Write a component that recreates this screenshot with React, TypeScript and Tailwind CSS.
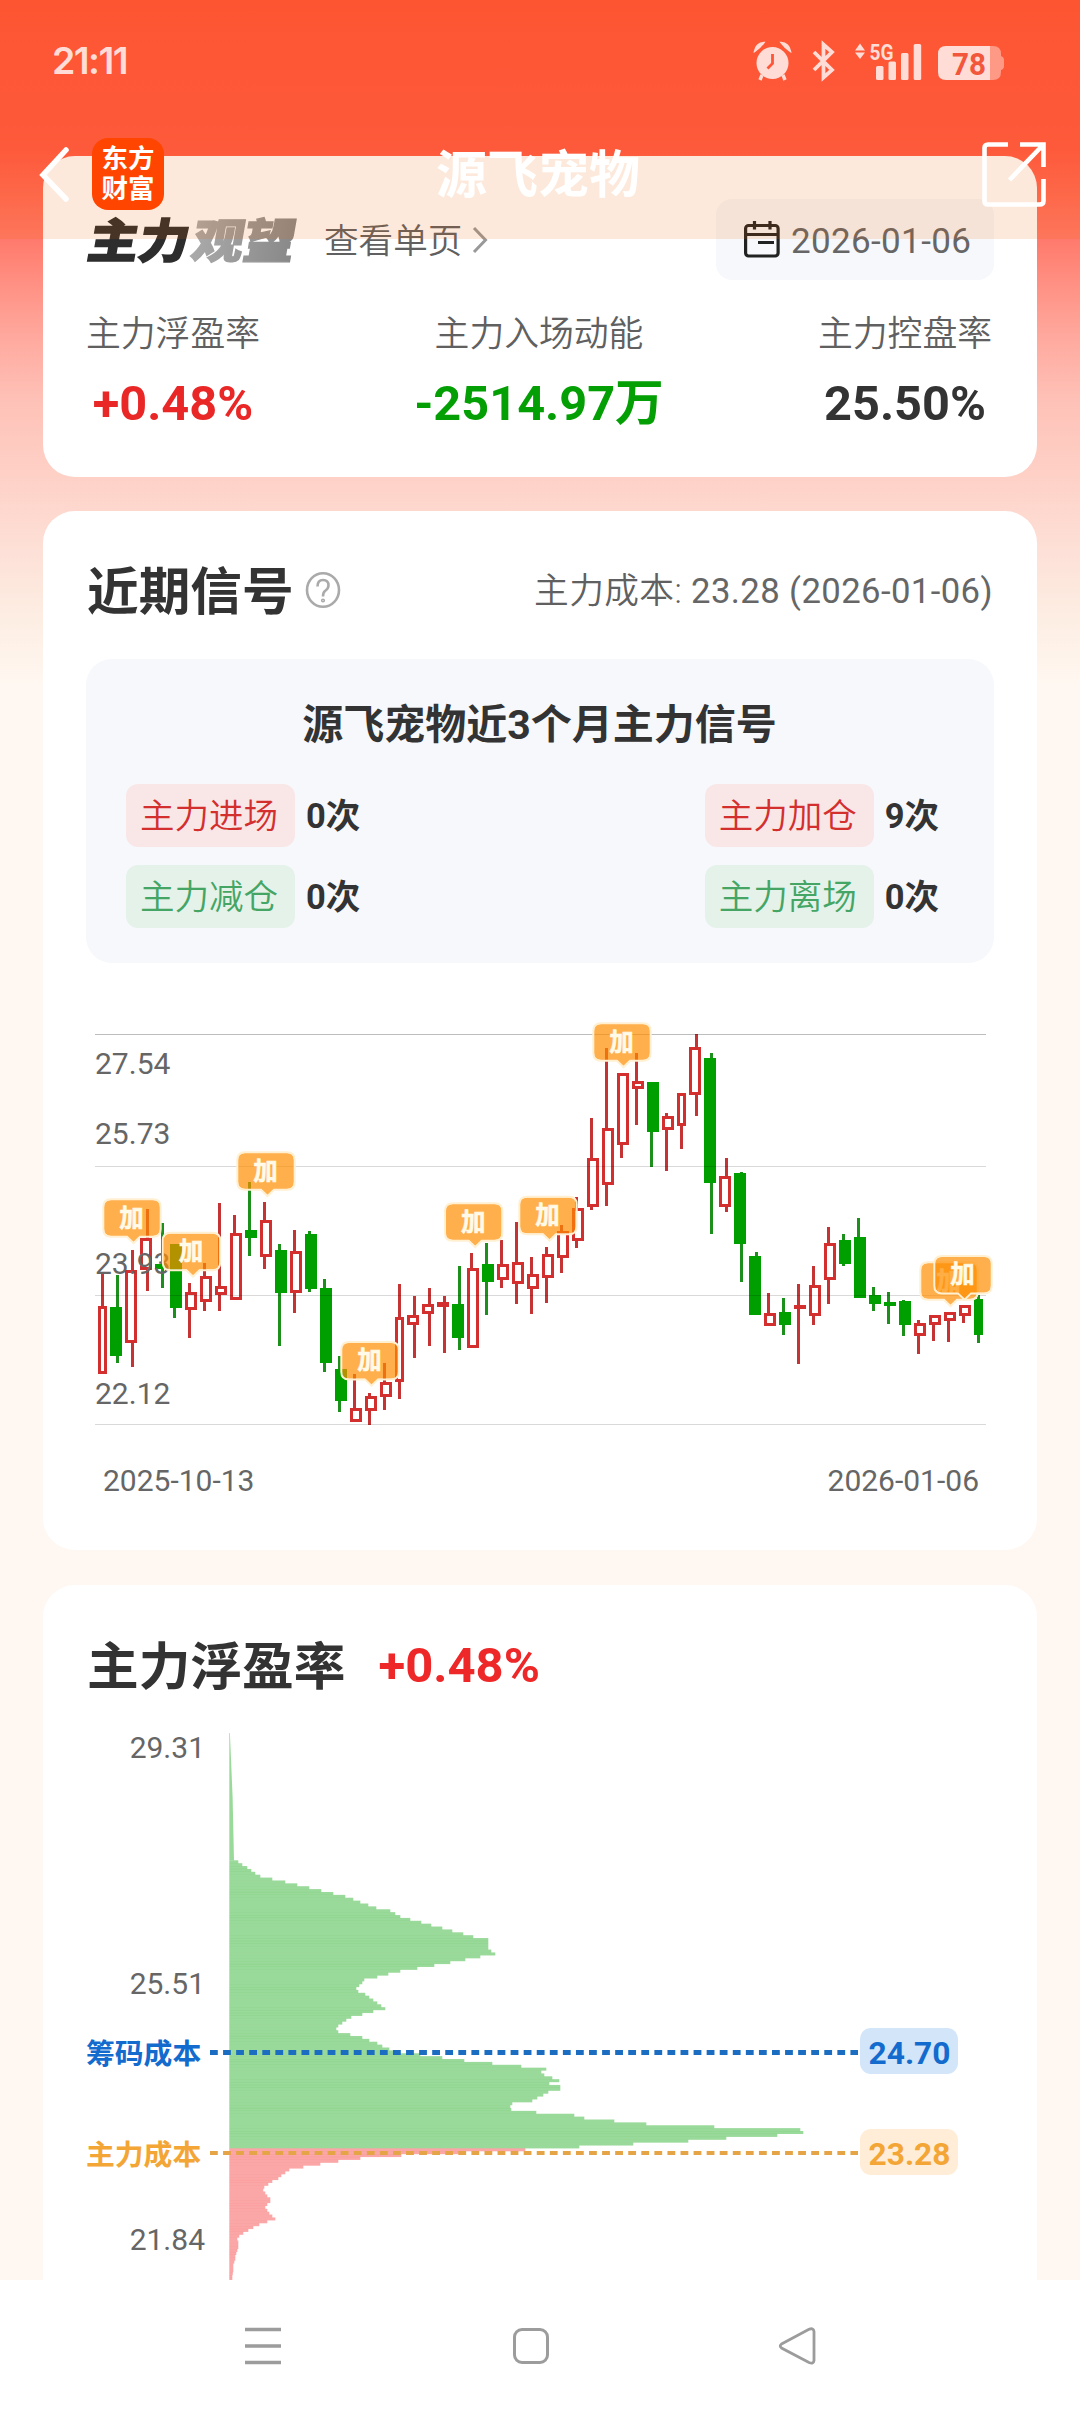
import type { ReactNode } from "react";

const SANS = "font-['Roboto','Noto_Sans_CJK_SC',sans-serif]";

// [bodyX, bodyWidth, wickX, high, top, bottom, low, up]
const candles = [
  [12, 9, 15, 263, 296, 364, 364, 1],
  [24, 12, 30, 265, 297, 346, 353, 0],
  [39, 12, 45, 240, 260, 333, 357, 1],
  [54, 12, 60, 199, 228, 260, 281, 1],
  [69, 12, 75, 213, 254, 259, 278, 0],
  [84, 12, 87, 234, 234, 298, 308, 0],
  [99, 12, 102, 273, 282, 300, 328, 1],
  [114, 12, 117, 253, 266, 292, 301, 1],
  [129, 12, 132, 193, 276, 285, 301, 1],
  [144, 12, 147, 205, 223, 290, 290, 1],
  [159, 12, 162, 172, 220, 228, 246, 0],
  [174, 12, 177, 192, 210, 247, 259, 1],
  [189, 12, 192, 234, 240, 283, 336, 0],
  [204, 12, 207, 220, 241, 283, 303, 1],
  [219, 12, 222, 221, 224, 279, 282, 0],
  [234, 12, 237, 269, 278, 353, 362, 0],
  [249, 12, 252, 346, 359, 391, 402, 0],
  [264, 12, 267, 364, 398, 412, 412, 1],
  [279, 12, 282, 383, 386, 401, 415, 1],
  [294, 12, 297, 353, 372, 387, 400, 1],
  [309, 9, 312, 274, 307, 372, 389, 1],
  [321, 12, 327, 286, 305, 315, 348, 1],
  [336, 12, 342, 278, 294, 304, 336, 1],
  [351, 12, 357, 286, 292, 297, 343, 1],
  [366, 12, 372, 256, 294, 328, 340, 0],
  [381, 12, 384, 243, 258, 338, 338, 1],
  [396, 12, 399, 233, 254, 272, 305, 0],
  [411, 12, 414, 230, 254, 270, 278, 1],
  [426, 12, 429, 212, 252, 274, 294, 1],
  [441, 12, 444, 247, 264, 279, 304, 1],
  [456, 12, 459, 237, 244, 268, 293, 1],
  [471, 12, 474, 215, 221, 248, 263, 1],
  [486, 12, 489, 187, 198, 231, 238, 1],
  [501, 12, 504, 108, 148, 197, 200, 1],
  [516, 12, 519, 38, 118, 175, 196, 1],
  [531, 12, 534, 63, 63, 135, 148, 1],
  [546, 12, 549, 43, 71, 79, 115, 1],
  [561, 12, 564, 72, 72, 122, 157, 0],
  [576, 12, 579, 103, 106, 120, 161, 1],
  [591, 9, 594, 83, 83, 116, 139, 1],
  [603, 12, 609, 24, 37, 85, 106, 1],
  [618, 12, 624, 43, 48, 173, 224, 0],
  [633, 12, 639, 148, 166, 197, 202, 1],
  [648, 12, 654, 162, 163, 234, 272, 0],
  [663, 12, 669, 242, 246, 305, 305, 0],
  [678, 12, 681, 283, 303, 316, 316, 1],
  [693, 12, 696, 288, 302, 315, 325, 0],
  [708, 12, 711, 274, 295, 299, 354, 1],
  [723, 12, 726, 256, 275, 306, 315, 1],
  [738, 12, 741, 217, 233, 270, 294, 1],
  [753, 12, 756, 224, 230, 254, 256, 0],
  [768, 12, 771, 208, 227, 288, 288, 0],
  [783, 12, 786, 277, 285, 294, 301, 0],
  [798, 12, 801, 282, 292, 296, 314, 0],
  [813, 12, 816, 290, 291, 315, 326, 0],
  [828, 12, 831, 310, 313, 326, 344, 1],
  [843, 12, 846, 305, 305, 315, 331, 1],
  [858, 12, 861, 302, 302, 311, 332, 1],
  [873, 12, 876, 295, 295, 306, 313, 1],
  [888, 9, 891, 285, 289, 325, 333, 0],
];

// top left corner of every "加" marker, relative to the chart
const marks = [
  [18, 190],
  [77.5, 223.5],
  [152, 143],
  [256, 332.7],
  [359.7, 194],
  [434, 187.5],
  [508, 14],
  [835, 253],
  [849, 246.7],
];

const profitBars = [
  9, 13, 18, 22, 26, 31, 43, 56, 68, 80, 92, 104, 116, 124, 131, 139, 147, 161, 166, 171,
  181, 192, 202, 213, 223, 234, 244, 259, 259, 259, 259, 262, 266, 251, 236, 221, 205, 188, 171, 159,
  148, 135, 133, 130, 127, 129, 136, 140, 144, 148, 152, 156, 144, 133, 122, 117, 113, 109, 107, 109,
  121, 133, 140, 148, 153, 160, 171, 191, 213, 235, 263, 292, 317, 312, 315, 323, 330, 320, 331, 331,
  319, 314, 308, 303, 283, 281, 282, 307, 345, 355, 385, 417, 485, 571, 574, 548, 497, 459, 404, 350,
];

const lossBars = [
  296, 231, 172, 131, 109, 91, 74, 60, 56, 52, 49, 43, 39, 35, 34, 36, 38, 41, 41, 38, 36, 38, 40, 43, 46,
  38, 30, 24, 19, 14, 10, 8, 9, 9, 9, 8, 7, 6, 6, 5, 4, 4, 4, 3.5, 3, 3,
];

function Candle({ data }: { data: number[] }) {
  const [x, w, wx, high, top, bottom, low, up] = data;
  const color = up ? "#d32f2f" : "#009f00";
  const wick = up ? "#c43434" : "#1d8f1d";
  return (
    <g>
      {top > high && <rect x={wx} y={high} width="3" height={top - high} fill={wick} />}
      {low > bottom && <rect x={wx} y={bottom} width="3" height={low - bottom} fill={wick} />}
      {up && bottom - top > 6 ? (
        <rect x={x + 1.5} y={top + 1.5} width={w - 3} height={bottom - top - 3} fill="none" stroke={color} strokeWidth="3" />
      ) : (
        <rect x={x} y={top} width={w} height={bottom - top} fill={color} />
      )}
    </g>
  );
}

function Mark({ x, y }: { x: number; y: number }) {
  return (
    <g transform={`translate(${x} ${y})`}>
      <path
        d="M7 0H49Q56 0 56 7V29Q56 36 49 36H36L29.5 42.5L23 36H7Q0 36 0 29V7Q0 0 7 0Z"
        fill="#ff8d00"
        fillOpacity="0.7"
      />
      <path
        d="M7 -.7H49Q56.7 -.7 56.7 7V29Q56.7 36.7 49 36.7H36L29.5 43L23 36.7H7Q-.7 36.7 -.7 29V7Q-.7 -.7 7 -.7Z"
        fill="none"
        stroke="#fff0d2"
        strokeWidth="2"
      />
      <text x="27.5" y="26.5" fontSize="24.5" fontWeight="700" fill="#fffbe8" stroke="#fffbe8" strokeWidth="0.6" textAnchor="middle">
        加
      </text>
    </g>
  );
}

function SignalChart() {
  return (
    <svg width="908" height="430" viewBox="0 0 908 430" className={`block overflow-visible ${SANS}`}>
      {candles.map((c) => (
        <Candle key={c[0]} data={c} />
      ))}
      <rect x="9" y="24" width="891" height="1" fill="#000" fillOpacity="0.26" />
      {[156, 285, 414].map((y) => (
        <rect key={y} x="9" y={y} width="891" height="1" fill="#000" fillOpacity="0.15" />
      ))}
      <g fontSize="30" fill="#666">
        <text x="9" y="64">27.54</text>
        <text x="9" y="134">25.73</text>
        <text x="9" y="264">23.93</text>
        <text x="9" y="394">22.12</text>
      </g>
      {marks.map(([x, y]) => (
        <Mark key={x} x={x} y={y} />
      ))}
    </svg>
  );
}

function CostChart() {
  const left = 143.3;
  const step = 2.88;
  return (
    <svg width="908" height="548" viewBox="0 0 908 548" className={`block overflow-visible ${SANS}`}>
      <g fill="#009f00" fillOpacity="0.4">
        <path d={`M${left} 0H${left + 0.6}L${left + 3.3} 64L${left + 4.7} 127.3H${left}Z`} />
        {profitBars.map((w, i) => (
          <rect key={i} x={left} y={127.3 + i * step} width={w} height="3" />
        ))}
      </g>
      <g fill="#f42424" fillOpacity="0.4">
        {lossBars.map((w, i) => (
          <rect key={i} x={left} y={415.3 + i * step} width={w} height="3" />
        ))}
      </g>
      <line x1="124" x2="772" y1="319.5" y2="319.5" stroke="#1b6dc1" strokeWidth="5" strokeDasharray="7.8 5.27" />
      <line x1="124" x2="772" y1="420" y2="420" stroke="#e5a446" strokeWidth="4" strokeDasharray="7.8 5.27" />
      <rect x="774" y="295" width="98" height="46" rx="11" fill="#d2e5f9" />
      <rect x="774" y="396" width="98" height="46" rx="11" fill="#ffedd7" />
      <g fontSize="31.7" fontWeight="700" textAnchor="middle">
        <text x="823.5" y="330.5" fill="#136bce">24.70</text>
        <text x="823.5" y="431.5" fill="#f3a636">23.28</text>
      </g>
      <g fontSize="28.8" fontWeight="700">
        <text x="0" y="330.5" fill="#136bce">筹码成本</text>
        <text x="0" y="431.5" fill="#f3a636">主力成本</text>
      </g>
      <g fontSize="30" fill="#666" textAnchor="end">
        <text x="119" y="25">29.31</text>
        <text x="119" y="261">25.51</text>
        <text x="119" y="517">21.84</text>
      </g>
    </svg>
  );
}

function StatusIcons() {
  return (
    <svg width="262" height="44" viewBox="0 0 262 44" fill="#ffdcd6" className={`block ${SANS}`}>
      {/* alarm */}
      <circle cx="26.5" cy="25" r="16" />
      <path d="M8.5 13.5Q10 5 18 4.5Q14 10 8.5 13.5ZM44.5 13.5Q43 5 35 4.5Q39 10 44.5 13.5Z" stroke="#ffdcd6" strokeWidth="1.5" />
      <path d="M16 37L14 42M37 37L39 42" stroke="#ffdcd6" strokeWidth="3.4" />
      <path d="M26.5 16V25.5L21.5 30.5" fill="none" stroke="#ff5638" strokeWidth="2.8" />
      {/* bluetooth */}
      <path d="M68 14L86 32L77.5 39.5V6.5L86 14L68 32" fill="none" stroke="#ffdcd6" strokeWidth="3.8" />
      {/* network */}
      <path d="M109 12.5L114 5.5L119 12.5ZM109 14.5L114 21L119 14.5Z" />
      <text x="123.5" y="21.5" fontSize="22.5" fontWeight="700" textLength="24" lengthAdjust="spacingAndGlyphs">5G</text>
      <rect x="130" y="28" width="7.5" height="14" rx="1.5" />
      <rect x="142.5" y="23.5" width="7.5" height="18.5" rx="1.5" />
      <rect x="155" y="15" width="7.5" height="27" rx="1.5" />
      <rect x="167.7" y="6" width="7.5" height="36" rx="1.5" />
      {/* battery */}
      <path d="M244 8H247Q255 8 255 16V18Q258 19 258 22V28Q258 31 255 32V34Q255 42 247 42H244Z" fillOpacity="0.5" />
      <path d="M200 8H244V42H200Q192 42 192 34V16Q192 8 200 8Z" />
      <text x="223" y="36.500" fontSize="31.500" fontWeight="700" fill="#f2573b" textAnchor="middle" textLength="34" lengthAdjust="spacingAndGlyphs">78</text>
    </svg>
  );
}

function Header() {
  return (
    <header className="absolute inset-x-0 top-0 h-[239px] bg-[#f06100]/14">
      <div className="flex h-[124px] justify-between pt-[38px] pr-[72px] pl-[52px]">
        <span className="pt-px font-['Inter',sans-serif] text-[37.5px] leading-[44px] font-semibold tracking-[-1.6px] text-[#ffdcd6]">21:11</span>
        <StatusIcons />
      </div>
      <div className="flex h-[99px] items-center justify-between pr-[34px] pl-[38px]">
        <div className="flex w-[126px] items-center justify-between">
          <svg width="33" height="56" viewBox="0 0 33 56" fill="none" stroke="#fff" strokeWidth="5.5" strokeLinecap="round">
            <path d="M28 4L5 29L28 53" />
          </svg>
          <div className="flex h-[72px] w-[72px] flex-col items-center justify-center rounded-[16px] bg-[#ff4500] pb-[4px] font-['Noto_Sans_CJK_SC',sans-serif] text-[26.5px] leading-[29.5px] font-bold text-white">
            <span>东方</span>
            <span>财富</span>
          </div>
        </div>
        <h1 className="ml-[-70px] pt-[4px] text-[51px] leading-none font-bold text-white">源飞宠物</h1>
        <svg width="64" height="66" viewBox="0 0 64 66" fill="none" stroke="#fff" strokeWidth="4.6">
          <path d="M26 3.5H6Q2.5 3.5 2.5 7V60Q2.5 63.5 6 63.5H57.5Q61.5 63.5 61.5 60V38" />
          <path d="M38 3.5H61.5V26M60 5L27.5 39" />
        </svg>
      </div>
    </header>
  );
}

function Metric({ label, value, color }: { label: string; value: string; color: string }) {
  return (
    <div className="flex flex-col items-center">
      <span className="text-[34.8px] leading-[40px] font-[350] text-[#606060]">{label}</span>
      <span className={`mt-[20px] text-[48.7px] leading-[60px] font-bold ${color}`}>{value}</span>
    </div>
  );
}

function Card({ className, children }: { className: string; children: ReactNode }) {
  return <section className={`rounded-[32px] bg-white px-[43px] ${className}`}>{children}</section>;
}

function Tag({ label, count, tone }: { label: string; count: string; tone: string }) {
  return (
    <div className="flex items-center">
      <span className={`flex h-[63px] w-[169px] items-center justify-center rounded-[12px] pt-[3px] pr-[3px] text-[34.5px] font-[350] ${tone}`}>{label}</span>
      <span className="ml-[11px] pt-[3px] text-[34.5px] font-bold text-[#333]">{count}</span>
    </div>
  );
}

export default function App() {
  const red = "bg-[#f9e7e8] text-[#d32f2f]";
  const green = "bg-[#e4f2ea] text-[#45a564]";
  return (
    <div className={`relative h-[2412px] w-[1080px] overflow-hidden bg-white text-[#333] ${SANS}`}>
      <main className="flex h-[2280px] flex-col overflow-hidden bg-[#fff8f2] bg-[linear-gradient(180deg,#ff533b_0px,#ff5945_150px,#ff6b58_200px,#ff7a6c_240px,#ff9386_290px,#ffaa9f_340px,#fec1b7_400px,#fed1c7_477px,#fde2d9_560px,#fdeee3_620px,#fff8f2_690px)] px-[43px] pt-[156px]">
        <Card className="h-[321px] shrink-0">
          <div className="flex items-center justify-between pt-[43px]">
            <div className="flex items-center">
              <svg width="212" height="46" viewBox="0 0 212 46" className="block overflow-visible">
                <defs>
                  <linearGradient id="fade" x1="0" x2="1">
                    <stop offset="0" stopColor="#aaa" />
                    <stop offset="1" stopColor="#888" />
                  </linearGradient>
                </defs>
                <g className="font-['Noto_Sans_CJK_SC',sans-serif]" fontSize="47" fontWeight="900" strokeWidth="1.4" transform="translate(3 0) skewX(-10)">
                  <text x="4" y="40.5" fill="#2d2d2d" stroke="#2d2d2d" textLength="101" lengthAdjust="spacingAndGlyphs">主力</text>
                  <text x="108" y="40.5" fill="url(#fade)" stroke="url(#fade)" textLength="103" lengthAdjust="spacingAndGlyphs">观望</text>
                </g>
              </svg>
              <span className="ml-[26px] pt-[2px] text-[34.6px] leading-[44px] font-[350] text-[#606060]">查看单页</span>
              <svg width="16" height="28" viewBox="0 0 16 28" fill="none" stroke="#999" strokeWidth="3" className="ml-[10px]">
                <path d="M2 2L13.5 14L2 26" />
              </svg>
            </div>
            <div className="flex h-[81px] w-[278px] items-center rounded-[16px] bg-[#f7f8fb] pl-[28px]">
              <svg width="36" height="37" viewBox="0 0 36 37" fill="none" stroke="#222" strokeWidth="3.2">
                <rect x="1.6" y="4.5" width="32.5" height="30.5" rx="3" />
                <path d="M10.5 0V8.5M26 0V8.5M2 13.5H34M14 21.5H30" />
              </svg>
              <span className="ml-[11px] pt-[5px] text-[35px] tracking-[0.35px] text-[#666]">2026-01-06</span>
            </div>
          </div>
          <div className="mt-[34px] flex justify-between pr-[2px]">
            <Metric label="主力浮盈率" value="+0.48%" color="text-[#ea2727]" />
            <Metric label="主力入场动能" value="-2514.97万" color="text-[#049f04]" />
            <Metric label="主力控盘率" value="25.50%" color="text-[#333]" />
          </div>
        </Card>

        <Card className="mt-[34px] h-[1039px] shrink-0">
          <div className="flex h-[148px] items-center justify-between pt-[11px] pr-px">
            <div className="flex items-center">
              <h2 className="ml-px pt-[4px] text-[51.7px] font-bold">近期信号</h2>
              <svg width="36" height="38" viewBox="0 0 36 38" fill="none" stroke="#aaa" strokeWidth="2.6" className="ml-[11px]">
                <ellipse cx="18" cy="19" rx="16" ry="16.8" />
                <path d="M12.500 15.500Q12.500 9 18 9T23.500 14.500Q23.500 17.500 20 20Q18 21.500 18 25.500" />
                <circle cx="18" cy="29.500" r="0.800" />
              </svg>
            </div>
            <span className="pt-px text-[34.7px] font-[350] tracking-[0.4px] text-[#606060]">
              主力成本: <span className="font-normal text-[#666]">23.28 (2026-01-06)</span>
            </span>
          </div>
          <div className="flex h-[304px] flex-col rounded-[26px] bg-[#f7f8fb] pt-[38px] pr-[55px] pl-[40px]">
            <h3 className="ml-[14px] text-center text-[41px] leading-[56px] font-bold">源飞宠物近3个月主力信号</h3>
            <div className="mt-[31px] flex justify-between">
              <Tag label="主力进场" count="0次" tone={red} />
              <Tag label="主力加仓" count="9次" tone={red} />
            </div>
            <div className="mt-[18px] flex justify-between">
              <Tag label="主力减仓" count="0次" tone={green} />
              <Tag label="主力离场" count="0次" tone={green} />
            </div>
          </div>
          <div className="mt-[47px]">
            <SignalChart />
          </div>
          <div className="mt-[22px] flex justify-between pr-[15px] pl-[17px] text-[30px] leading-[38px] text-[#666]">
            <span>2025-10-13</span>
            <span>2026-01-06</span>
          </div>
        </Card>

        <Card className="mt-[35px] h-[760px] shrink-0">
          <div className="flex h-[148px] items-center pt-[14px]">
            <h2 className="ml-px pt-[3px] text-[51.7px] font-bold">主力浮盈率</h2>
            <span className="ml-[33px] text-[49px] font-bold text-[#ee2828]">+0.48%</span>
          </div>
          <CostChart />
        </Card>
      </main>

      <nav className="flex h-[132px] items-center bg-white pl-[243px]">
        <svg width="40" height="40" viewBox="0 0 40 40" fill="none" stroke="#9c9c9c" strokeWidth="3.4">
          <path d="M2 3.5H38M2 20H38M2 36.5H38" />
        </svg>
        <svg width="40" height="40" viewBox="0 0 40 40" fill="none" stroke="#9c9c9c" strokeWidth="3" className="ml-[228px]">
          <rect x="3.5" y="3.5" width="33" height="33" rx="7.5" />
        </svg>
        <svg width="40" height="40" viewBox="0 0 40 40" fill="none" stroke="#9c9c9c" strokeWidth="2.8" className="ml-[227px]">
          <path d="M3.5 18L31 3.3Q35.5 1.5 36 5.5V34.5Q35.500 38.500 31 36.500L3.500 22Q1 20 3.500 18Z" />
        </svg>
      </nav>

      <Header />
    </div>
  );
}
